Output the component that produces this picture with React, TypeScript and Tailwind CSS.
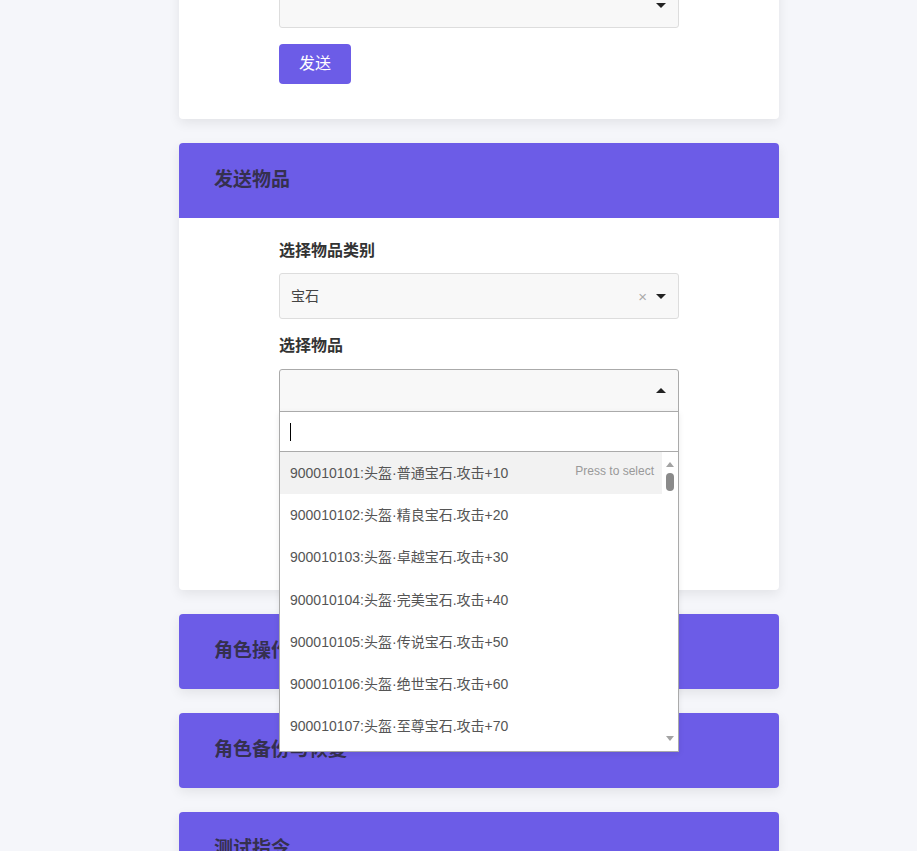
import React from "react";

const FONT = { fontFamily: '"Liberation Sans", "Noto Sans CJK SC", sans-serif' };

function ArrowDown() {
  return <span className="block w-0 h-0 border-x-[5px] border-x-transparent border-t-[5px] border-t-[#222]" />;
}
function ArrowUp() {
  return <span className="block w-0 h-0 border-x-[5px] border-x-transparent border-b-[5px] border-b-[#222]" />;
}

function CollapsedCard({ title }: { title: string }) {
  return (
    <div className="bg-[#6c5ce7] rounded-[4px] h-[75px] flex items-center pl-[35px] shadow-[0_4px_12px_rgba(0,0,0,0.08)]">
      <h2 className="text-[19px] font-bold text-[#35304f]">{title}</h2>
    </div>
  );
}

const items = [
  "900010101:头盔·普通宝石.攻击+10",
  "900010102:头盔·精良宝石.攻击+20",
  "900010103:头盔·卓越宝石.攻击+30",
  "900010104:头盔·完美宝石.攻击+40",
  "900010105:头盔·传说宝石.攻击+50",
  "900010106:头盔·绝世宝石.攻击+60",
  "900010107:头盔·至尊宝石.攻击+70",
  "900010108:头盔·神圣宝石.攻击+80",
];

export default function App() {
  return (
    <div className="min-h-[851px] bg-[#f5f6fa] overflow-hidden" style={FONT}>
      <div className="w-[600px] ml-[179px] flex flex-col gap-[24px] -mt-[18px] pb-10">
        {/* Card 1 (scrolled) */}
        <div className="bg-white rounded-[4px] shadow-[0_4px_12px_rgba(0,0,0,0.08)]">
          <div className="w-[400px] mx-auto pb-[35px]">
            <div className="h-[46px] bg-[#f8f8f8] border border-[#ddd] rounded-[3px] flex items-center justify-end pr-[12px]">
              <ArrowDown />
            </div>
            <button className="mt-[16px] w-[72px] h-[40px] bg-[#6c5ce7] text-white text-[16px] leading-[40px] rounded-[4px]">发送</button>
          </div>
        </div>

        {/* Card 2 */}
        <div className="bg-white rounded-[4px] shadow-[0_4px_12px_rgba(0,0,0,0.08)]">
          <div className="bg-[#6c5ce7] rounded-t-[4px] h-[75px] flex items-center pl-[35px]">
            <h2 className="text-[19px] font-bold text-[#35304f]">发送物品</h2>
          </div>
          <div className="w-[400px] mx-auto pt-[21px] pb-[23px]">
            <label className="block text-[16px] leading-[24px] font-bold text-[#333] mb-[10px]">选择物品类别</label>
            <div className="h-[46px] bg-[#f8f8f8] border border-[#ddd] rounded-[3px] flex items-center pl-[11px] pr-[12px]">
              <span className="text-[14px] text-[#444] flex-1">宝石</span>
              <span className="text-[15px] text-[#aaa] mr-[9px] leading-none">×</span>
              <ArrowDown />
            </div>

            <label className="block mt-[15px] text-[16px] leading-[24px] font-bold text-[#333] mb-[11px]">选择物品</label>
            <div className="relative z-10">
              <div className="h-[46px] bg-[#f8f8f8] border border-[#aaa] rounded-[3px] flex items-center justify-end pr-[12px]">
                <span className="-mt-[4px]"><ArrowUp /></span>
              </div>
              {/* Dropdown overlay */}
              <div className="absolute left-0 top-[42px] w-[400px] bg-white border border-[#aaa] shadow-[0_2px_6px_rgba(0,0,0,0.08)]">
                <div className="h-[39px] flex items-center pl-[10px]">
                  <span className="block w-px h-[18px] bg-black" />
                </div>
                <div className="relative h-[300px] border-t border-[#aaa] flex">
                  <div className="flex-1 overflow-hidden">
                    {items.map((t, i) => (
                      <div
                        key={t}
                        className={`h-[42.3px] flex items-center justify-between pl-[10px] pr-[8px] text-[14px] text-[#555] ${i === 0 ? "bg-[#f2f2f2]" : ""}`}
                      >
                        <span>{t}</span>
                        {i === 0 && <span className="text-[12px] text-[#999] -mt-[4px]">Press to select</span>}
                      </div>
                    ))}
                  </div>
                  <div className="w-[16px] flex flex-col items-center bg-white">
                    <span className="mt-[10px] block w-0 h-0 border-x-[4px] border-x-transparent border-b-[5px] border-b-[#a3a3a3]" />
                    <span className="mt-[6px] block w-[8px] h-[18px] rounded-[4px] bg-[#8a8a8a]" />
                    <span className="mt-auto mb-[10px] block w-0 h-0 border-x-[4px] border-x-transparent border-t-[5px] border-t-[#a3a3a3]" />
                  </div>
                </div>
              </div>
            </div>

            <label className="block mt-[15px] text-[16px] leading-[24px] font-bold text-[#333] mb-[11px]">数量</label>
            <div className="h-[46px] bg-[#f8f8f8] border border-[#ddd] rounded-[3px]" />
            <button className="mt-[16px] w-[72px] h-[40px] bg-[#6c5ce7] text-white text-[16px] leading-[40px] rounded-[4px]">发送</button>
          </div>
        </div>

        <CollapsedCard title="角色操作" />
        <CollapsedCard title="角色备份与恢复" />
        <CollapsedCard title="测试指令" />
      </div>
    </div>
  );
}
